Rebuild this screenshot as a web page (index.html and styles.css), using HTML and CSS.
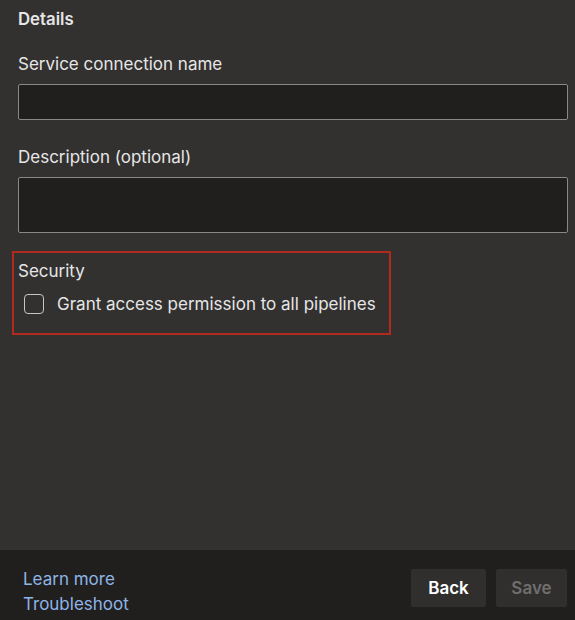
FILE: index.html
```html
<!DOCTYPE html>
<html>
<head>
<meta charset="utf-8">
<link rel="stylesheet" href="styles.css">
</head>
<body>
<div class="panel">
  <main class="content">
    <h2 class="heading">Details</h2>
    <div class="field">
      <label class="label">Service connection name</label>
      <div class="input"></div>
    </div>
    <div class="field">
      <label class="label">Description (optional)</label>
      <div class="input tall"></div>
    </div>
    <section class="security">
      <div class="sec-title">Security</div>
      <div class="check-row">
        <span class="checkbox"></span>
        <span class="check-label">Grant access permission to all pipelines</span>
      </div>
    </section>
  </main>
  <footer class="footer">
    <div class="links">
      <a class="link">Learn more</a>
      <a class="link">Troubleshoot</a>
    </div>
    <div class="buttons">
      <button class="btn back">Back</button>
      <button class="btn save">Save</button>
    </div>
  </footer>
</div>
</body>
</html>
```
FILE: styles.css
```css
* { box-sizing: border-box; }
html, body { margin: 0; padding: 0; }
body {
  width: 575px;
  height: 620px;
  background: #323130;
  font-family: Inter, "Noto Sans", sans-serif;
  color: #e6e6e6;
  overflow: hidden;
}
.panel {
  height: 620px;
  display: flex;
  flex-direction: column;
}
.content {
  flex: 1;
  padding: 8px 7px 0 18px;
}
.heading {
  margin: 0;
  font-size: 16.8px;
  font-weight: 600;
  line-height: 22px;
}
.field { margin-top: 23px; }
.field + .field { margin-top: 26px; }
.label {
  display: block;
  font-size: 17px;
  line-height: 22px;
  margin-bottom: 9px;
}
.input {
  height: 36px;
  background: #201f1e;
  border: 1px solid #8a8886;
  border-radius: 2px;
}
.input.tall { height: 56px; }
.security {
  margin: 18px 0 0 -6px;
  width: 379px;
  height: 84px;
  border: 2px solid #b02a1e;
  padding: 7px 0 0 4px;
}
.sec-title {
  font-size: 17px;
  line-height: 22px;
}
.check-row {
  display: flex;
  align-items: center;
  margin-top: 11px;
  padding-left: 6px;
}
.checkbox {
  width: 20px;
  height: 20px;
  border: 1.5px solid #c8c6c4;
  border-radius: 4px;
  margin-right: 13px;
}
.check-label {
  font-size: 17px;
  line-height: 22px;
}
.footer {
  height: 70px;
  background: #201f1e;
  display: flex;
  justify-content: space-between;
  align-items: center;
  padding: 0 8px 0 23px;
}
.links {
  display: flex;
  flex-direction: column;
  padding-top: 14px;
}
.link {
  color: #8fb4e6;
  font-size: 17px;
  line-height: 25px;
}
.buttons {
  display: flex;
  gap: 10px;
  padding-top: 6px;
}
.btn {
  height: 38px;
  border: none;
  border-radius: 2px;
  background: #302f2e;
  font-family: inherit;
  font-size: 17px;
  font-weight: 600;
  padding: 0;
}
.back { width: 75px; color: #ffffff; }
.save { width: 71px; color: #6f6e6d; }
```
